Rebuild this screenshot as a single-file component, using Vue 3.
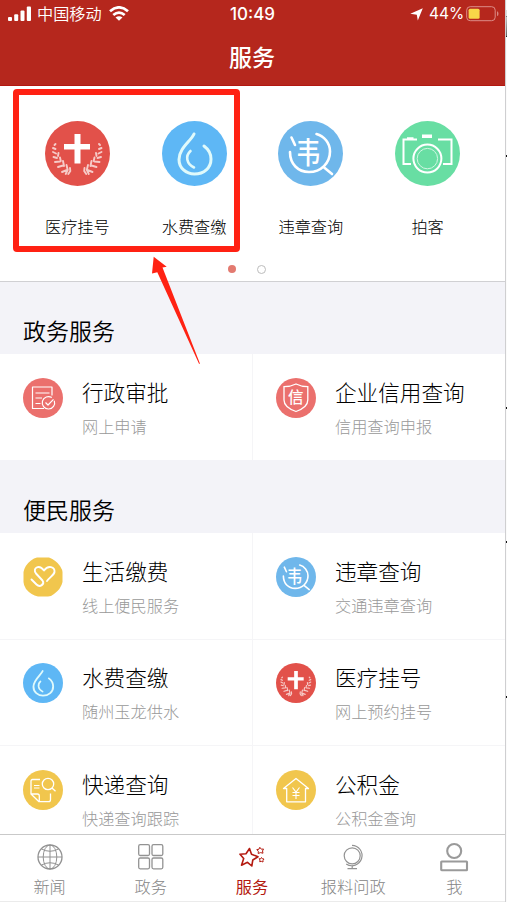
<script setup>
const shortcuts = [
  { label: '医疗挂号', icon: 'medical' },
  { label: '水费查缴', icon: 'water' },
  { label: '违章查询', icon: 'traffic' },
  { label: '拍客', icon: 'camera' },
]

const sections = [
  {
    title: '政务服务',
    items: [
      { title: '行政审批', sub: '网上申请', icon: 'approve' },
      { title: '企业信用查询', sub: '信用查询申报', icon: 'credit' },
    ],
  },
  {
    title: '便民服务',
    items: [
      { title: '生活缴费', sub: '线上便民服务', icon: 'heart' },
      { title: '违章查询', sub: '交通违章查询', icon: 'traffic' },
      { title: '水费查缴', sub: '随州玉龙供水', icon: 'water' },
      { title: '医疗挂号', sub: '网上预约挂号', icon: 'medical' },
      { title: '快递查询', sub: '快递查询跟踪', icon: 'express' },
      { title: '公积金', sub: '公积金查询', icon: 'house' },
    ],
  },
]

const tabs = [
  { label: '新闻', icon: 'globe' },
  { label: '政务', icon: 'grid' },
  { label: '服务', icon: 'stars', active: true },
  { label: '报料问政', icon: 'stand' },
  { label: '我', icon: 'user' },
]

// Characters set inside an icon, in its 40 x 40 box
const glyphs = {
  traffic: { char: '韦', size: 18, place: 'translate(18.6 25.8) scale(.84 1)' },
  credit: { char: '信', size: 15.5, place: 'translate(19.8 25.2)' },
}
</script>

<template>
  <div class="screen">
    <svg class="defs" width="0" height="0">
      <symbol id="medical" viewBox="0 0 65 65">
        <circle cx="32.5" cy="32.5" r="32.5" fill="#e2514a" />
        <path d="M29.500 13h6v10h9.500v5.500H35.500v14h-6v-14H19v-5.500h10.500z" fill="#fff" />
        <g fill="none" stroke="#f6cbc8" stroke-width="1.9" stroke-linecap="round">
          <path id="leaves" d="M10.500 23l-1 1M8 27l2.500 1M8 31l3 1.500M8.500 36l3.500 1M13.500 32l-.5 3M10 41l5-.5M15 36.500l.8 3.500M13 46l5-1.500M18 40l1 5M17 51l5-2M21.500 44l1.200 5-2 4M25 47l.3 3-2 3" />
          <use href="#leaves" transform="translate(64.500 0) scale(-1 1)" />
        </g>
      </symbol>
      <symbol id="water" viewBox="0 0 65 65">
        <circle cx="32.5" cy="32.5" r="32.5" fill="#5eb7f5" />
        <g fill="none" stroke="#e0fafb" stroke-linecap="round">
          <path d="M32 13C29 20 17 27 17 38.500C17 47 24 53 32.500 53C42 53 49 47 49 38C49 32 46 28 42 25" stroke-width="3" />
          <path d="M28.500 30C23 35 24.500 43 32 46.500" stroke-width="2.600" />
        </g>
      </symbol>
      <symbol id="traffic" viewBox="0 0 65 65">
        <circle cx="32.5" cy="32.5" r="32.5" fill="#6fb7eb" />
        <path d="M12 31C12 43 20 51 31 51C43 51 52 42 52 30.500C52 22 46 15 38.500 13M45.500 46L54 53M13.500 16.500L17 24" fill="none" stroke="#fff" stroke-width="2.600" stroke-linecap="round" />
      </symbol>
      <symbol id="camera" viewBox="0 0 65 65">
        <circle cx="32.5" cy="32.5" r="32.5" fill="#68dea3" />
        <g fill="none" stroke="#fff" stroke-width="2">
          <path d="M22 18.500H8.500V43H16M43 18.500H56.500V43H48" />
          <circle cx="32.400" cy="37.600" r="14" />
          <circle cx="32.400" cy="37.600" r="10.200" stroke-width="1" stroke="#d2f6e3" />
        </g>
        <path d="M27 13.500h10v3.500H27zM12 16.200h6.500v2H12z" fill="#fff" />
      </symbol>
      <symbol id="approve" viewBox="0 0 40 40">
        <circle cx="20" cy="20" r="20" fill="#eb706d" />
        <g fill="none" stroke="#fff" stroke-width="1.200" stroke-linejoin="round">
          <path d="M29 17.500V9H9.500V30.500H21M12.500 15H26.500M12.500 20H19M12.500 25.500H17.500" />
          <path d="M31.300 22.800A6.200 6.200 0 1 1 28.800 19.600M22.500 24.500L25 27L30.500 21.300" />
        </g>
      </symbol>
      <symbol id="credit" viewBox="0 0 40 40">
        <circle cx="20" cy="20" r="20" fill="#eb706d" />
        <path d="M20 6C16 8 12 8.700 8 8.700V22C8 28 13 31 20 33.500C27 31 31.800 28 31.800 22V8.700C28 8.700 24 8 20 6z" fill="none" stroke="#fff" stroke-width="1.300" />
      </symbol>
      <symbol id="heart" viewBox="0 0 40 40">
        <path d="M14 .5H26Q33 3 37 9Q39.500 13 39.500 15V25Q38 32 31 37Q28 39.500 25 39.500H15Q8 38 3 32Q.5 28 .5 25V15Q2 8 8 3.500Q11 .8 14 .5z" fill="#f1c64d" />
        <path d="M8.500 22.500L13.500 27.500C17 31 22 27 19.500 23.500L13 16.500C9 11 16 7 21 13.500C25 8 32 9.500 31.500 15C31 18 27 20 24 24" fill="none" stroke="#fff" stroke-width="1.900" stroke-linecap="round" stroke-linejoin="round" />
      </symbol>
      <symbol id="express" viewBox="0 0 40 40">
        <circle cx="20" cy="20" r="20" fill="#f1c64d" />
        <g fill="none" stroke="#fff" stroke-width="1.300" stroke-linejoin="round">
          <path d="M17 9.500H9.500Q8 9.500 8 11V24L16 31.700H25.500Q27.500 31.700 27.500 29.500V23.500M8 24H14.500Q16.300 24 16.300 26V31.700" />
          <circle cx="25" cy="14" r="5.700" />
          <path d="M29 18L32.500 21.300" />
          <path d="M11 15.500H16.500M11 18H16.500" stroke-width="1" />
        </g>
      </symbol>
      <symbol id="house" viewBox="0 0 40 40">
        <circle cx="20" cy="20" r="20" fill="#f1c64d" />
        <path d="M7.500 18.500L20 8.500L32.500 18.500H29.500V31.800H10.700V18.500z" fill="none" stroke="#fff" stroke-width="1.300" stroke-linejoin="round" />
        <path d="M16.500 17.500L20 22L23.500 17.500M20 22V29M16.500 22.500H23.500M16.500 25.500H23.500" fill="none" stroke="#fff" stroke-width="1.100" />
      </symbol>
      <symbol id="globe" viewBox="0 0 30 30">
        <g fill="none" stroke="#929292" stroke-width="1">
          <circle cx="15" cy="15" r="12" stroke-width="1.300" />
          <ellipse cx="15" cy="15" rx="6.800" ry="12" />
          <path d="M15 3V27M3 15H27M6.500 7Q15 11.500 23.500 7M6.500 23Q15 18.500 23.500 23" />
        </g>
      </symbol>
      <symbol id="grid" viewBox="0 0 30 30">
        <g fill="none" stroke="#939393" stroke-width="1.300">
          <rect x="2.700" y="2.700" width="10.800" height="10.800" rx="1.500" />
          <rect x="16" y="2.700" width="10.800" height="10.800" rx="1.500" />
          <rect x="2.700" y="16" width="10.800" height="10.800" rx="1.500" />
          <rect x="16" y="16" width="10.800" height="10.800" rx="1.500" />
        </g>
      </symbol>
      <symbol id="stars" viewBox="0 0 30 30">
        <g fill="none" stroke="#b41a10" stroke-width="1.600" stroke-linejoin="round">
          <path d="M12.500 6.500L14.500 12.200L21 14.800L15.800 18L14.800 24L10.500 20.300L4.500 23.200L6.700 16.500L3 12.200L9 11.700z" />
          <path d="M22.800 5.300L24.300 7.200L26.500 7L25.500 9L26 11.200L23.500 10.600L21.200 11.500L21.300 9.200L19.800 7.600L22 7.200z" stroke-width="1" />
          <path d="M24.500 15.500L25.300 16.800L27 17L26 18.300L26 20L24.400 19.400L22.700 19.700L23 18L22.200 16.700L23.700 16.700z" stroke-width="1" />
        </g>
      </symbol>
      <symbol id="stand" viewBox="0 0 30 30">
        <g fill="none" stroke="#939393" stroke-width="1.200">
          <circle cx="14.200" cy="13.800" r="8" />
          <path d="M14 3.300A10.200 10.200 0 1 1 8.200 22M14.200 23.500V26.500M9.500 26.700H19" />
        </g>
      </symbol>
      <symbol id="user" viewBox="0 0 30 30">
        <g fill="none" stroke="#9a9a9a" stroke-width="2.100">
          <circle cx="15.200" cy="9" r="7" />
          <rect x="2.200" y="19.500" width="25.800" height="8.700" rx=".5" />
        </g>
      </symbol>
    </svg>

    <header class="header">
      <div class="status">
        <svg class="signal" width="24" height="16" viewBox="0 0 24 16" fill="#fff">
          <rect x="0" y="11" width="4" height="4" rx="1" />
          <rect x="6.200" y="8.300" width="4" height="6.700" rx="1" />
          <rect x="12.500" y="4.500" width="4" height="10.500" rx="1" />
          <rect x="18.800" y=".5" width="4.200" height="14.500" rx="1" />
        </svg>
        <span class="carrier">中国移动</span>
        <svg class="wifi" width="20" height="15" viewBox="0 0 20 15" fill="none" stroke="#fff" stroke-width="2.800">
          <path d="M1 5.200Q10-2.400 19 5.200M4.300 9Q10 4.200 15.700 9" />
          <path d="M10 14.800L6.500 11.500Q10 8.800 13.500 11.500z" fill="#fff" stroke="none" />
        </svg>
        <span class="time">10:49</span>
        <svg class="locate" width="13" height="13" viewBox="0 0 13 13"><path d="M12.800 .2L7.800 12.500L6.800 6.700L.3 5.800z" fill="#fff" /></svg>
        <span class="percent">44%</span>
        <svg class="battery" width="34" height="16" viewBox="0 0 34 16">
          <rect x=".7" y=".7" width="28.500" height="14" rx="3.500" fill="none" stroke="#dc8d88" stroke-width="1" />
          <rect x="2.600" y="2.700" width="11" height="10" rx="1.500" fill="#f8d648" />
          <path d="M31 5.300Q32.500 5.500 32.500 7.700Q32.500 9.900 31 10.100z" fill="#d98680" />
        </svg>
      </div>
      <h1 class="title">服务</h1>
    </header>

    <section class="shortcuts">
      <div class="shortcut-row">
        <div v-for="s in shortcuts" :key="s.label" class="shortcut">
          <svg class="shortcut-icon" viewBox="0 0 40 40">
            <use :href="'#' + s.icon" width="40" height="40" />
            <text v-if="glyphs[s.icon]" class="glyph" :font-size="glyphs[s.icon].size" :transform="glyphs[s.icon].place">{{ glyphs[s.icon].char }}</text>
          </svg>
          <span class="shortcut-label">{{ s.label }}</span>
        </div>
      </div>
      <div class="dots"><i class="dot on"></i><i class="dot"></i></div>
      <div class="frame"></div>
      <svg class="arrow" width="52" height="110" viewBox="0 0 52 110">
        <path d="M3.700 .7L16.700 10.700L12.500 11.500L50 107.700L49 107.700L7.300 16.300L2 17.500z" fill="#ff2213" />
      </svg>
    </section>

    <main class="content">
      <section v-for="sec in sections" :key="sec.title" class="section">
        <h2 class="section-title">{{ sec.title }}</h2>
        <div class="cells">
          <div v-for="item in sec.items" :key="item.title" class="cell">
            <svg class="cell-icon" viewBox="0 0 40 40">
              <use :href="'#' + item.icon" width="40" height="40" />
              <text v-if="glyphs[item.icon]" class="glyph" :font-size="glyphs[item.icon].size" :transform="glyphs[item.icon].place">{{ glyphs[item.icon].char }}</text>
            </svg>
            <div class="cell-text">
              <span class="cell-title">{{ item.title }}</span>
              <span class="cell-sub">{{ item.sub }}</span>
            </div>
          </div>
        </div>
      </section>
    </main>

    <nav class="tabs">
      <div v-for="t in tabs" :key="t.label" class="tab" :class="{ active: t.active }">
        <svg class="tab-icon"><use :href="'#' + t.icon" /></svg>
        <span>{{ t.label }}</span>
      </div>
    </nav>

    <div class="edge">
      <i class="edge-bar"></i>
      <i class="mark m1"></i>
      <i class="mark m2"></i>
      <i class="mark m3"></i>
      <i class="mark m4"></i>
    </div>
  </div>
</template>

<style>
body {
  margin: 0;
  background: #fff;
}
</style>

<style scoped>
.screen {
  position: relative;
  box-sizing: border-box;
  width: 507px;
  height: 902px;
  padding-right: 1px;
  overflow: hidden;
  display: flex;
  flex-direction: column;
  background: #fff;
  font-family: 'Noto Sans CJK SC', sans-serif;
  font-weight: 300;
  color: #000;
}
.defs {
  position: absolute;
}
.glyph {
  fill: #fff;
  font-weight: 500;
  text-anchor: middle;
}
.header {
  flex: none;
  box-sizing: border-box;
  height: 86px;
  background: #b5271d;
  border-bottom: 1px solid #b31710;
  color: #fff;
}
.status {
  display: flex;
  align-items: center;
  height: 28px;
  padding-left: 8px;
  line-height: 28px;
}
.signal {
  margin-right: 5px;
}
.carrier {
  width: 72px;
  margin-top: -2px;
  font-size: 16.2px;
  font-weight: 350;
}
.wifi {
  margin-right: 101px;
  margin-top: -2px;
}
.time {
  width: 180px;
  font-family: Inter, sans-serif;
  font-weight: 500;
  font-size: 17px;
}
.locate {
  margin-right: 6px;
}
.percent {
  width: 37px;
  font-family: Inter, sans-serif;
  font-weight: 400;
  font-size: 15.500px;
}
.title {
  margin: 11px 0 0;
  padding-right: 2px;
  text-align: center;
  font-size: 23px;
  font-weight: 500;
  line-height: 34px;
}
.shortcuts {
  position: relative;
  flex: none;
  box-sizing: border-box;
  height: 196px;
  border-bottom: 1px solid #d0d0d3;
}
.shortcut-row {
  display: flex;
  padding: 35px 20px 0 19px;
}
.shortcut {
  flex: 1;
  display: flex;
  flex-direction: column;
  align-items: center;
}
.shortcut-icon {
  width: 65px;
  height: 65px;
}
.shortcut-label {
  margin-top: 28px;
  font-size: 16.200px;
  line-height: 24px;
}
.dots {
  display: flex;
  justify-content: center;
  gap: 21px;
  margin-top: 27px;
  padding-right: 12px;
}
.dot {
  box-sizing: border-box;
  width: 9px;
  height: 9px;
  border: 1px solid #bcbcbc;
  border-radius: 50%;
}
.dot.on {
  width: 8px;
  height: 8px;
  border: 0;
  background: #e37a70;
}
.frame {
  position: absolute;
  box-sizing: border-box;
  left: 13px;
  top: 3px;
  width: 227px;
  height: 163px;
  border: 6px solid #ff2113;
  border-radius: 4px;
}
.arrow {
  position: absolute;
  z-index: 2;
  left: 150px;
  top: 170px;
}
.content {
  flex: none;
  height: 552px;
  overflow: hidden;
  background: #f3f3f8;
}
.section-title {
  box-sizing: border-box;
  height: 73px;
  margin: 0;
  padding: 32px 0 0 23px;
  font-size: 23px;
  font-weight: 350;
  line-height: 34px;
}
.section:first-child .section-title {
  height: 72px;
  padding-top: 31px;
}
.cells {
  display: grid;
  grid-template-columns: 253px 253px;
}
.cell {
  box-sizing: border-box;
  height: 106.700px;
  display: flex;
  gap: 19px;
  padding: 23.500px 0 0 23px;
  background: #fff;
  border-bottom: 1px solid #f5f5f7;
}
.cell:nth-child(odd) {
  border-right: 1px solid #f5f5f7;
}
.section:first-child .cell {
  height: 106px;
  border-bottom: 0;
}
.cell-icon {
  flex: none;
  width: 40px;
  height: 40px;
}
.cell-text {
  display: flex;
  flex-direction: column;
  margin-top: -2px;
}
.cell-title {
  font-size: 21.600px;
  line-height: 32px;
}
.cell-sub {
  margin-top: 6px;
  font-size: 16.200px;
  line-height: 24px;
  color: #999;
}
.tabs {
  flex: none;
  box-sizing: border-box;
  height: 68px;
  display: flex;
  background: #fff;
  border-top: 1px solid #c9c9c9;
  border-bottom: 1px solid #ebebeb;
}
.tab {
  flex: 1;
  display: flex;
  flex-direction: column;
  align-items: center;
  padding-right: 2px;
  font-size: 16.200px;
  line-height: 24px;
  color: #858585;
}
.tab-icon {
  width: 30px;
  height: 30px;
  margin: 7px 0 2px;
}
.tab.active {
  color: #b41a10;
  font-weight: 400;
}
.edge {
  position: absolute;
  top: 0;
  right: 0;
  width: 2px;
  height: 902px;
  background: linear-gradient(90deg, #cfcfd1 1px, #fbfbfb 1px);
}
.edge-bar,
.mark {
  position: absolute;
  right: 0;
  width: 1px;
  height: 2px;
  background: #111;
}
.edge-bar {
  top: 10px;
  height: 27px;
  background: linear-gradient(#ddd 6px, #777 6px 7px, #c5c5c5 7px, #666 26px, #222 26px);
}
.m1 { top: 155px; }
.m2 { top: 407px; }
.m3 { top: 541px; }
.m4 { top: 696px; }
</style>
